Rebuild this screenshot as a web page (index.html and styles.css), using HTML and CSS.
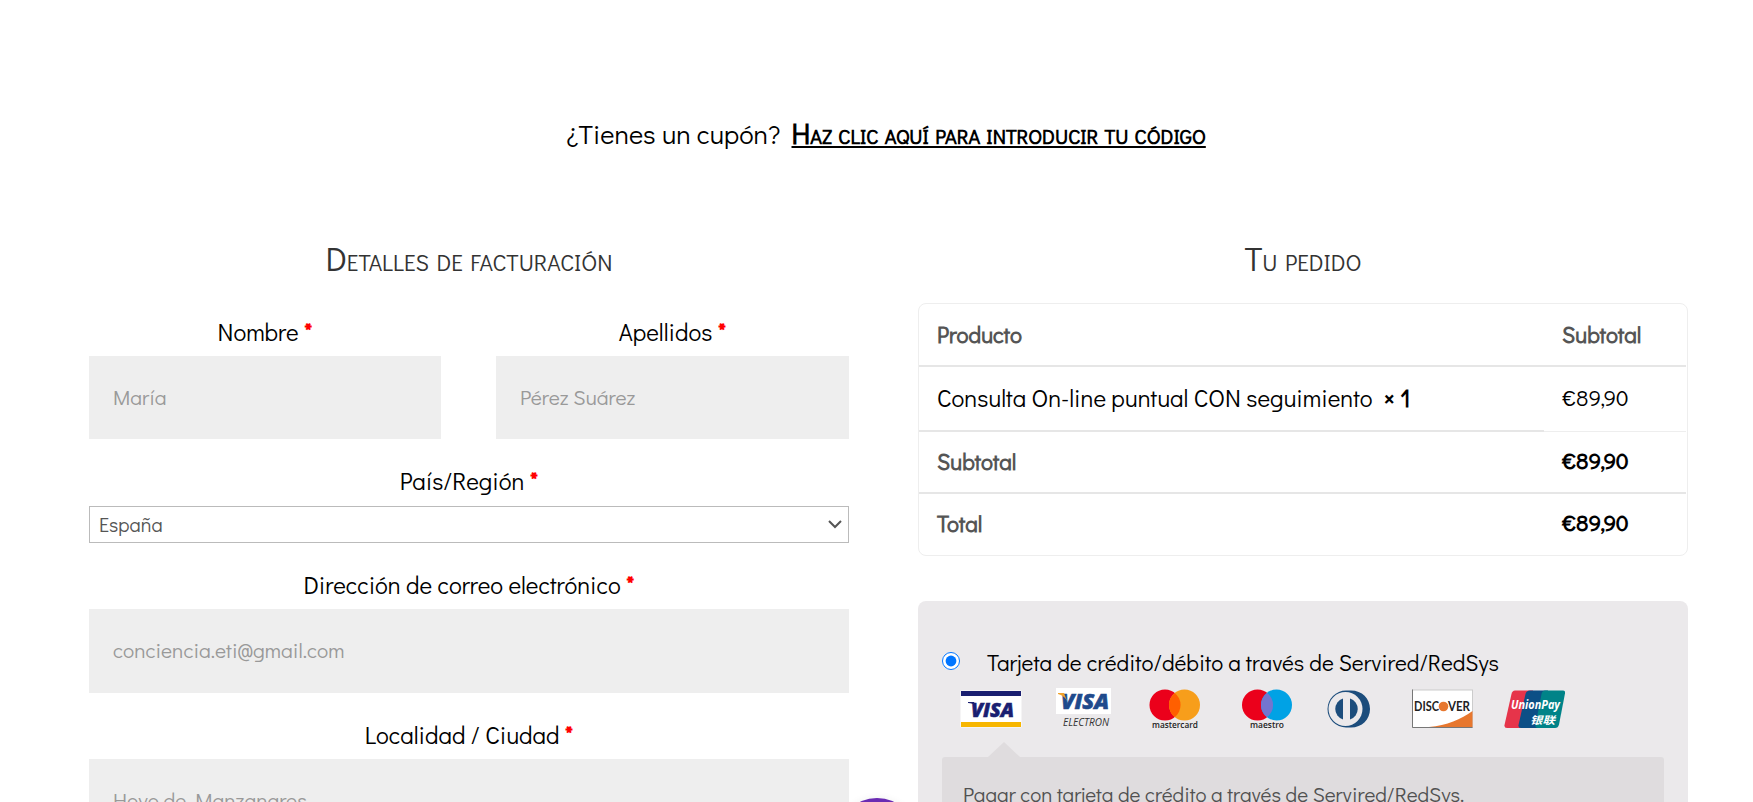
FILE: index.html
```
<!DOCTYPE html>
<html lang="es">
  <head>
    <meta charset="UTF-8" />
    <title>Finalizar compra</title>
    <meta name="viewport" content="width=device-width, initial-scale=1.0" />
    <link rel="stylesheet" href="styles.css">
  </head>
  <body>
    <p class="coupon">
      <span class="coupon-text">¿Tienes un cupón?</span>
      <a class="coupon-link" href="#">Haz clic aquí para introducir tu código</a>
    </p>

    <form class="checkout">
      <div class="billing">
        <h3 class="title-billing">Detalles de facturación</h3>

        <div class="row">
          <div class="field">
            <label for="nombre">Nombre <b>*</b></label>
            <input type="text" id="nombre" placeholder="María" />
          </div>
          <div class="field">
            <label for="apellidos">Apellidos <b>*</b></label>
            <input type="text" id="apellidos" placeholder="Pérez Suárez" />
          </div>
        </div>

        <div class="field field-country">
          <label for="pais">País/Región <b>*</b></label>
          <div class="select-wrap">
            <select id="pais">
              <option>España</option>
            </select>
            <svg class="chevron" width="14" height="9" viewBox="0 0 14 9">
              <path d="M1 1l6 6 6-6" fill="none" stroke="#555" stroke-width="2" />
            </svg>
          </div>
        </div>

        <div class="field field-email">
          <label for="email">Dirección de correo electrónico <b>*</b></label>
          <input type="email" id="email" placeholder="conciencia.eti@gmail.com" />
        </div>

        <div class="field field-city">
          <label for="ciudad">Localidad / Ciudad <b>*</b></label>
          <input type="text" id="ciudad" placeholder="Hoyo de Manzanares" />
        </div>
      </div>

      <div class="order">
        <h3 class="title-order">Tu pedido</h3>

        <table class="order-table">
          <tr class="head">
            <th>Producto</th>
            <th class="amount">Subtotal</th>
          </tr>
          <tr class="item">
            <td>Consulta On-line puntual CON seguimiento&nbsp; <b>×&nbsp;1</b></td>
            <td class="amount price">€89,90</td>
          </tr>
          <tr class="subtotal">
            <th>Subtotal</th>
            <td class="amount price"><b>€89,90</b></td>
          </tr>
          <tr class="total">
            <th>Total</th>
            <td class="amount price"><b>€89,90</b></td>
          </tr>
        </table>

        <div class="payment">
          <div class="method">
            <input type="radio" id="redsys" name="pago" checked />
            <label for="redsys">Tarjeta de crédito/débito a través de Servired/RedSys</label>
          </div>

          <div class="cards">
            <!-- Visa -->
            <svg width="92" height="44" viewBox="0 0 92 44">
              <rect x="10.5" y="4.5" width="61" height="37" rx="1" fill="#fff" />
              <rect x="11" y="5" width="60" height="5" fill="#1a1f71" />
              <rect x="11" y="36" width="60" height="5" fill="#f7b600" />
              <text class="logo-visa" x="21" y="31" font-size="20" textLength="43" lengthAdjust="spacingAndGlyphs" fill="#1a1f71" stroke="#1a1f71">VISA</text>
              <path d="M18 16h6l2 4c-2-2-5-3-8-3z" fill="#1a1f71" />
            </svg>
            <!-- Visa Electron -->
            <svg width="92" height="44" viewBox="0 0 92 44">
              <rect x="14" y="2" width="55" height="26" fill="#fff" />
              <text class="logo-visa" x="19" y="23" font-size="21" textLength="48" lengthAdjust="spacingAndGlyphs" fill="#1f4a8c" stroke="#1f4a8c">VISA</text>
              <path d="M16 7h6l3 8c-2-4-5-6-9-7z" fill="#f0a12b" />
              <text class="logo-electron" x="21" y="40" font-size="10.5" textLength="46" lengthAdjust="spacingAndGlyphs" fill="#333">ELECTRON</text>
            </svg>
            <!-- Mastercard -->
            <svg width="92" height="44" viewBox="0 0 92 44">
              <circle cx="31" cy="19" r="15.5" fill="#eb001b" />
              <circle cx="50.5" cy="19" r="15.5" fill="#f79e1b" />
              <path d="M40.75 6.9a15.5 15.5 0 0 1 0 24.2a15.5 15.5 0 0 1 0-24.2z" fill="#ff5f00" />
              <text class="logo-name" x="18" y="42" font-size="8.5" textLength="46" lengthAdjust="spacingAndGlyphs" fill="#222">mastercard</text>
            </svg>
            <!-- Maestro -->
            <svg width="92" height="44" viewBox="0 0 92 44">
              <circle cx="31.5" cy="19" r="15.5" fill="#eb001b" />
              <circle cx="50.5" cy="19" r="15.5" fill="#00a2e5" />
              <path d="M41 6.7a15.5 15.5 0 0 1 0 24.6a15.5 15.5 0 0 1 0-24.6z" fill="#7375cf" />
              <text class="logo-name" x="24" y="42" font-size="8.5" textLength="34" lengthAdjust="spacingAndGlyphs" fill="#222">maestro</text>
            </svg>
            <!-- Diners Club -->
            <svg width="92" height="44" viewBox="0 0 92 44">
              <path d="M28 4.5h5c11 0 19 8 19 18.5s-8 18.5-19 18.5h-5a18.500 18.500 0 0 1 0-37z" fill="#1c4d7c" />
              <circle cx="27.5" cy="23" r="17" fill="#ebe9eb" />
              <path d="M25 12.5a11 11 0 0 0 0 21z" fill="#1c4d7c" />
              <path d="M32 12.5a11 11 0 0 1 0 21z" fill="#1c4d7c" />
            </svg>
            <!-- Discover -->
            <svg width="92" height="44" viewBox="0 0 92 44">
              <rect x="2.5" y="4" width="60" height="37.5" fill="#fff" stroke="#ccc" stroke-width="1" />
              <path d="M2.5 3.5v38h60" fill="none" stroke="#777" />
              <path d="M19 41c18-1.5 32-8 43.5-16v16z" fill="#e7772e" />
              <text class="logo-discover" x="4" y="25" font-size="13.5" textLength="25" lengthAdjust="spacingAndGlyphs" fill="#222">DISC</text>
              <circle cx="33.5" cy="20.5" r="4.8" fill="#e7772e" />
              <text class="logo-discover" x="38" y="25" font-size="13.5" textLength="22" lengthAdjust="spacingAndGlyphs" fill="#222">VER</text>
            </svg>
            <!-- UnionPay -->
            <svg width="92" height="44" viewBox="0 0 92 44">
              <path d="M13 4.5h18l-7 37.5H5q-3 0-2.5-3l7-31q.8-3.5 3.5-3.5z" fill="#e6344a" />
              <path d="M28 4.5h18l-7 37.5H19q-3 0-2.5-3l7-31q.8-3.5 4.5-3.5z" fill="#0c4f86" />
              <path d="M43 4.5h18q2.5 0 2 3l-6 31q-.8 3.5-4 3.5H36q-3 0-2.5-3l6-31q.8-3.5 3.5-3.5z" fill="#008388" />
              <text class="logo-union" x="9" y="23" font-size="12" textLength="49" lengthAdjust="spacingAndGlyphs" fill="#fff">UnionPay</text>
              <text class="logo-cjk" x="28" y="38" font-size="10.5" textLength="25" lengthAdjust="spacingAndGlyphs" fill="#fff">银联</text>
            </svg>
          </div>

          <div class="payment-box">Pagar con tarjeta de crédito a través de Servired/RedSys.</div>
        </div>
      </div>
    </form>

    <div class="chat-button"></div>
  </body>
</html>
```
FILE: styles.css
```
* {
  box-sizing: border-box;
}

body {
  margin: 0;
  height: 802px;
  overflow: hidden;
  background: #fff;
  color: #000;
  font-family: "Didact Gothic", Lato, sans-serif;
  font-size: 24px;
}

.coupon {
  display: flex;
  justify-content: center;
  align-items: baseline;
  gap: 11px;
  margin: 0;
  padding: 112px 0 0 19px;
  height: 235px;
  line-height: 42px;
}

.coupon-text {
  font-size: 27px;
}

.coupon-link {
  color: #000;
  font-size: 28.1px;
  font-weight: bold;
  font-variant: small-caps;
  text-decoration: underline;
  text-decoration-thickness: 2px;
  text-underline-offset: 2px;
}

.checkout {
  display: grid;
  grid-template-columns: 760px 770px;
  column-gap: 69px;
  padding-left: 89px;
}

h3 {
  margin: 0;
  height: 68px;
  line-height: 46px;
  font-size: 33.5px;
  font-weight: normal;
  font-variant: small-caps;
  text-align: center;
  color: #333;
}

.row {
  display: grid;
  grid-template-columns: 352px 353px;
  column-gap: 55px;
  padding-top: 9px;
}

.field label {
  display: block;
  height: 44px;
  line-height: 40px;
  text-align: center;
}

.field label b {
  color: red;
}

.field input {
  display: block;
  width: 100%;
  height: 83px;
  padding: 0 24px 2px;
  border: none;
  border-radius: 0;
  background: #eee;
  font-family: inherit;
  font-size: 21px;
}

.field input::placeholder {
  color: #999;
}

.field-country {
  padding-top: 22px;
}

.field-country label {
  height: 45px;
}

.field-email {
  padding-top: 22px;
}

.field-city {
  padding-top: 22px;
}

.field-email input {
  height: 84px;
}

.select-wrap {
  display: flex;
  align-items: center;
  height: 37px;
  border: 1px solid #bbb;
  padding-right: 6px;
}

.select-wrap select {
  flex: 1;
  appearance: none;
  border: none;
  padding: 0 0 2px 9px;
  background: none;
  color: #555;
  font-family: inherit;
  font-size: 20px;
}

.order-table {
  width: 770px;
  height: 253px;
  padding-right: 1px;
  border: 1px solid #eee;
  border-radius: 8px;
  border-collapse: separate;
  border-spacing: 0;
}

.order-table th,
.order-table td {
  padding: 0 18px 2px;
  border-bottom: 2px solid #e6e6e6;
  text-align: left;
  line-height: 30px;
}

.order-table th {
  color: #555;
  font-size: 22.5px;
}

.order-table .amount {
  width: 142px;
}

.order-table .price {
  font-size: 22.4px;
}

.head {
  height: 63px;
}

.item {
  height: 65px;
}

.item .price {
  border-bottom: 1px solid #eee;
}

.subtotal {
  height: 62px;
}

.order-table .total th,
.order-table .total td {
  padding-bottom: 3px;
  border-bottom: none;
}

.payment {
  margin-top: 45px;
  height: 201px;
  padding: 42px 24px 0;
  border-radius: 8px 8px 0 0;
  background: #ebe9eb;
}

.method {
  display: flex;
  height: 43px;
}

.method input {
  width: 18px;
  height: 18px;
  margin: 9px 27px 0 0;
}

.method label {
  line-height: 38px;
  font-size: 22.5px;
}

.cards {
  display: flex;
  height: 71px;
  padding-left: 8px;
}

.logo-visa {
  font-family: "Open Sans", sans-serif;
  font-weight: 800;
  font-style: italic;
  stroke-width: 0.6px;
}

.logo-electron {
  font-family: "Open Sans", sans-serif;
  font-style: italic;
}

.logo-name {
  font-family: "Open Sans", sans-serif;
  font-weight: 600;
}

.logo-discover {
  font-family: Lato, sans-serif;
  font-weight: bold;
}

.logo-union {
  font-family: "Open Sans", sans-serif;
  font-weight: bold;
  font-style: italic;
}

.logo-cjk {
  font-family: "Noto Sans CJK SC", sans-serif;
  font-weight: bold;
  font-style: italic;
}

.payment-box {
  position: relative;
  height: 45px;
  padding: 19px 21px 0;
  border-radius: 3px 3px 0 0;
  background: #dfdcde;
  color: #515151;
  font-size: 20.7px;
  line-height: 36px;
}

/* arrow that points to the selected method */
.payment-box::before {
  content: "";
  position: absolute;
  left: 46px;
  top: -15px;
  border: 16px solid transparent;
  border-top: none;
  border-bottom: 15px solid #dfdcde;
}

.chat-button {
  position: fixed;
  left: 837px;
  top: 798px;
  width: 80px;
  height: 80px;
  border-radius: 50%;
  background: #6a2bb3;
  box-shadow: 0 1px 8px rgba(0, 0, 0, 0.08);
}
```
